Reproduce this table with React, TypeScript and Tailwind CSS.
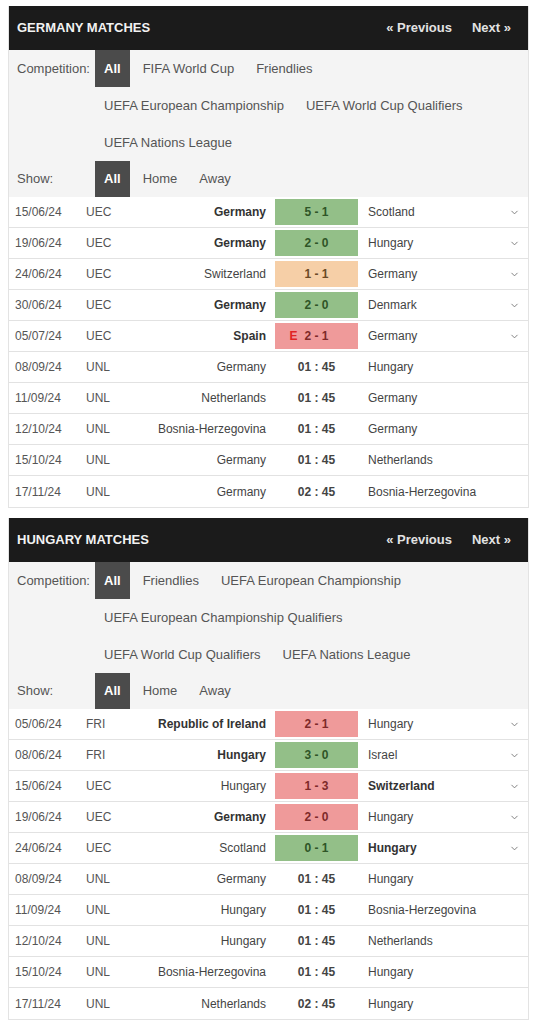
import { ChevronDown } from 'lucide-react'

type Result = 'w' | 'd' | 'l'

type Match = {
    date: string
    comp: string
    home: string
    away: string
    score?: string
    time?: string
    result?: Result
    bold?: 'home' | 'away'
    extra?: boolean
}

const germanyMatches: Match[] = [
    { date: '15/06/24', comp: 'UEC', home: 'Germany', away: 'Scotland', score: '5 - 1', result: 'w', bold: 'home' },
    { date: '19/06/24', comp: 'UEC', home: 'Germany', away: 'Hungary', score: '2 - 0', result: 'w', bold: 'home' },
    { date: '24/06/24', comp: 'UEC', home: 'Switzerland', away: 'Germany', score: '1 - 1', result: 'd' },
    { date: '30/06/24', comp: 'UEC', home: 'Germany', away: 'Denmark', score: '2 - 0', result: 'w', bold: 'home' },
    { date: '05/07/24', comp: 'UEC', home: 'Spain', away: 'Germany', score: '2 - 1', result: 'l', bold: 'home', extra: true },
    { date: '08/09/24', comp: 'UNL', home: 'Germany', away: 'Hungary', time: '01 : 45' },
    { date: '11/09/24', comp: 'UNL', home: 'Netherlands', away: 'Germany', time: '01 : 45' },
    { date: '12/10/24', comp: 'UNL', home: 'Bosnia-Herzegovina', away: 'Germany', time: '01 : 45' },
    { date: '15/10/24', comp: 'UNL', home: 'Germany', away: 'Netherlands', time: '01 : 45' },
    { date: '17/11/24', comp: 'UNL', home: 'Germany', away: 'Bosnia-Herzegovina', time: '02 : 45' },
]

const hungaryMatches: Match[] = [
    { date: '05/06/24', comp: 'FRI', home: 'Republic of Ireland', away: 'Hungary', score: '2 - 1', result: 'l', bold: 'home' },
    { date: '08/06/24', comp: 'FRI', home: 'Hungary', away: 'Israel', score: '3 - 0', result: 'w', bold: 'home' },
    { date: '15/06/24', comp: 'UEC', home: 'Hungary', away: 'Switzerland', score: '1 - 3', result: 'l', bold: 'away' },
    { date: '19/06/24', comp: 'UEC', home: 'Germany', away: 'Hungary', score: '2 - 0', result: 'l', bold: 'home' },
    { date: '24/06/24', comp: 'UEC', home: 'Scotland', away: 'Hungary', score: '0 - 1', result: 'w', bold: 'away' },
    { date: '08/09/24', comp: 'UNL', home: 'Germany', away: 'Hungary', time: '01 : 45' },
    { date: '11/09/24', comp: 'UNL', home: 'Hungary', away: 'Bosnia-Herzegovina', time: '01 : 45' },
    { date: '12/10/24', comp: 'UNL', home: 'Hungary', away: 'Netherlands', time: '01 : 45' },
    { date: '15/10/24', comp: 'UNL', home: 'Bosnia-Herzegovina', away: 'Hungary', time: '01 : 45' },
    { date: '17/11/24', comp: 'UNL', home: 'Netherlands', away: 'Hungary', time: '02 : 45' },
]

const scoreStyles: Record<Result, string> = {
    w: 'bg-[#93bf88] text-[#2f5527]',
    d: 'bg-[#f6cfa7] text-[#6b4a26]',
    l: 'bg-[#ef9a9a] text-[#7e2a2a]',
}

function FilterRow({ label, items, tall = true }: { label: string; items: string[]; tall?: boolean }) {
    return (
        <div className="flex">
            <div className={`flex w-[78px] shrink-0 items-center ${tall ? 'h-[37px]' : 'h-[36px]'}`}>{label}</div>
            <div className="flex flex-wrap gap-x-[4px]">
                {items.map((item, i) => (
                    <span
                        key={item}
                        className={`flex items-center px-[9px] ${tall ? 'h-[37px]' : 'h-[36px]'} ${
                            i === 0 ? 'bg-[#4b4b4b] font-bold text-white' : ''
                        }`}
                    >
                        {item}
                    </span>
                ))}
            </div>
        </div>
    )
}

function MatchRow({ m, last }: { m: Match; last: boolean }) {
    return (
        <div
            className={`grid h-[31px] grid-cols-[71px_50px_139px_83px_1fr_27px] items-center pl-[6px] text-[12px] text-[#555] ${
                last ? '' : 'border-b border-[#e2e2e2]'
            }`}
        >
            <span>{m.date}</span>
            <span>{m.comp}</span>
            <span className={`truncate pr-[9px] text-right ${m.bold === 'home' ? 'font-bold text-[#333]' : 'text-[#444]'}`}>
                {m.home}
            </span>
            {m.result ? (
                <div className={`flex h-[26px] items-center justify-center font-bold ${scoreStyles[m.result]}`}>
                    <span className="relative">
                        {m.extra && (
                            <span className="absolute right-full mr-[7px] text-[#e02424]">E</span>
                        )}
                        {m.score}
                    </span>
                </div>
            ) : (
                <div className="text-center font-bold text-[#444]">{m.time}</div>
            )}
            <span className={`truncate pl-[10px] ${m.bold === 'away' ? 'font-bold text-[#333]' : 'text-[#444]'}`}>
                {m.away}
            </span>
            <span className="flex justify-center">
                {m.result && <ChevronDown size={11} strokeWidth={2} className="text-[#777]" />}
            </span>
        </div>
    )
}

function MatchesPanel({ title, comps, matches }: { title: string; comps: string[]; matches: Match[] }) {
    return (
        <section className="border-x border-b border-[#e3e3e3] bg-white">
            <div className="flex h-[44px] items-center justify-between bg-[#1b1b1b] pl-[8px] pr-[17px] text-[13px] font-bold">
                <h2 className="text-[#f2f2f2]">{title}</h2>
                <div className="flex gap-[20px] text-[#e2e2e2]">
                    <span>« Previous</span>
                    <span>Next »</span>
                </div>
            </div>

            <div className="bg-[#f4f4f4] pl-[8px] pr-[24px] text-[13px] text-[#555]">
                <FilterRow label="Competition:" items={comps} />
                <FilterRow label="Show:" items={['All', 'Home', 'Away']} tall={false} />
            </div>

            <div>
                {matches.map((m, i) => (
                    <MatchRow key={m.date + m.home} m={m} last={i === matches.length - 1} />
                ))}
            </div>
        </section>
    )
}

export default function App() {
    return (
        <div className="flex min-h-[1024px] flex-col gap-[10px] bg-white px-[8px] pt-[6px] font-['Liberation_Sans',Arial,sans-serif]">
            <MatchesPanel
                title="GERMANY MATCHES"
                comps={[
                    'All',
                    'FIFA World Cup',
                    'Friendlies',
                    'UEFA European Championship',
                    'UEFA World Cup Qualifiers',
                    'UEFA Nations League',
                ]}
                matches={germanyMatches}
            />
            <MatchesPanel
                title="HUNGARY MATCHES"
                comps={[
                    'All',
                    'Friendlies',
                    'UEFA European Championship',
                    'UEFA European Championship Qualifiers',
                    'UEFA World Cup Qualifiers',
                    'UEFA Nations League',
                ]}
                matches={hungaryMatches}
            />
        </div>
    )
}
